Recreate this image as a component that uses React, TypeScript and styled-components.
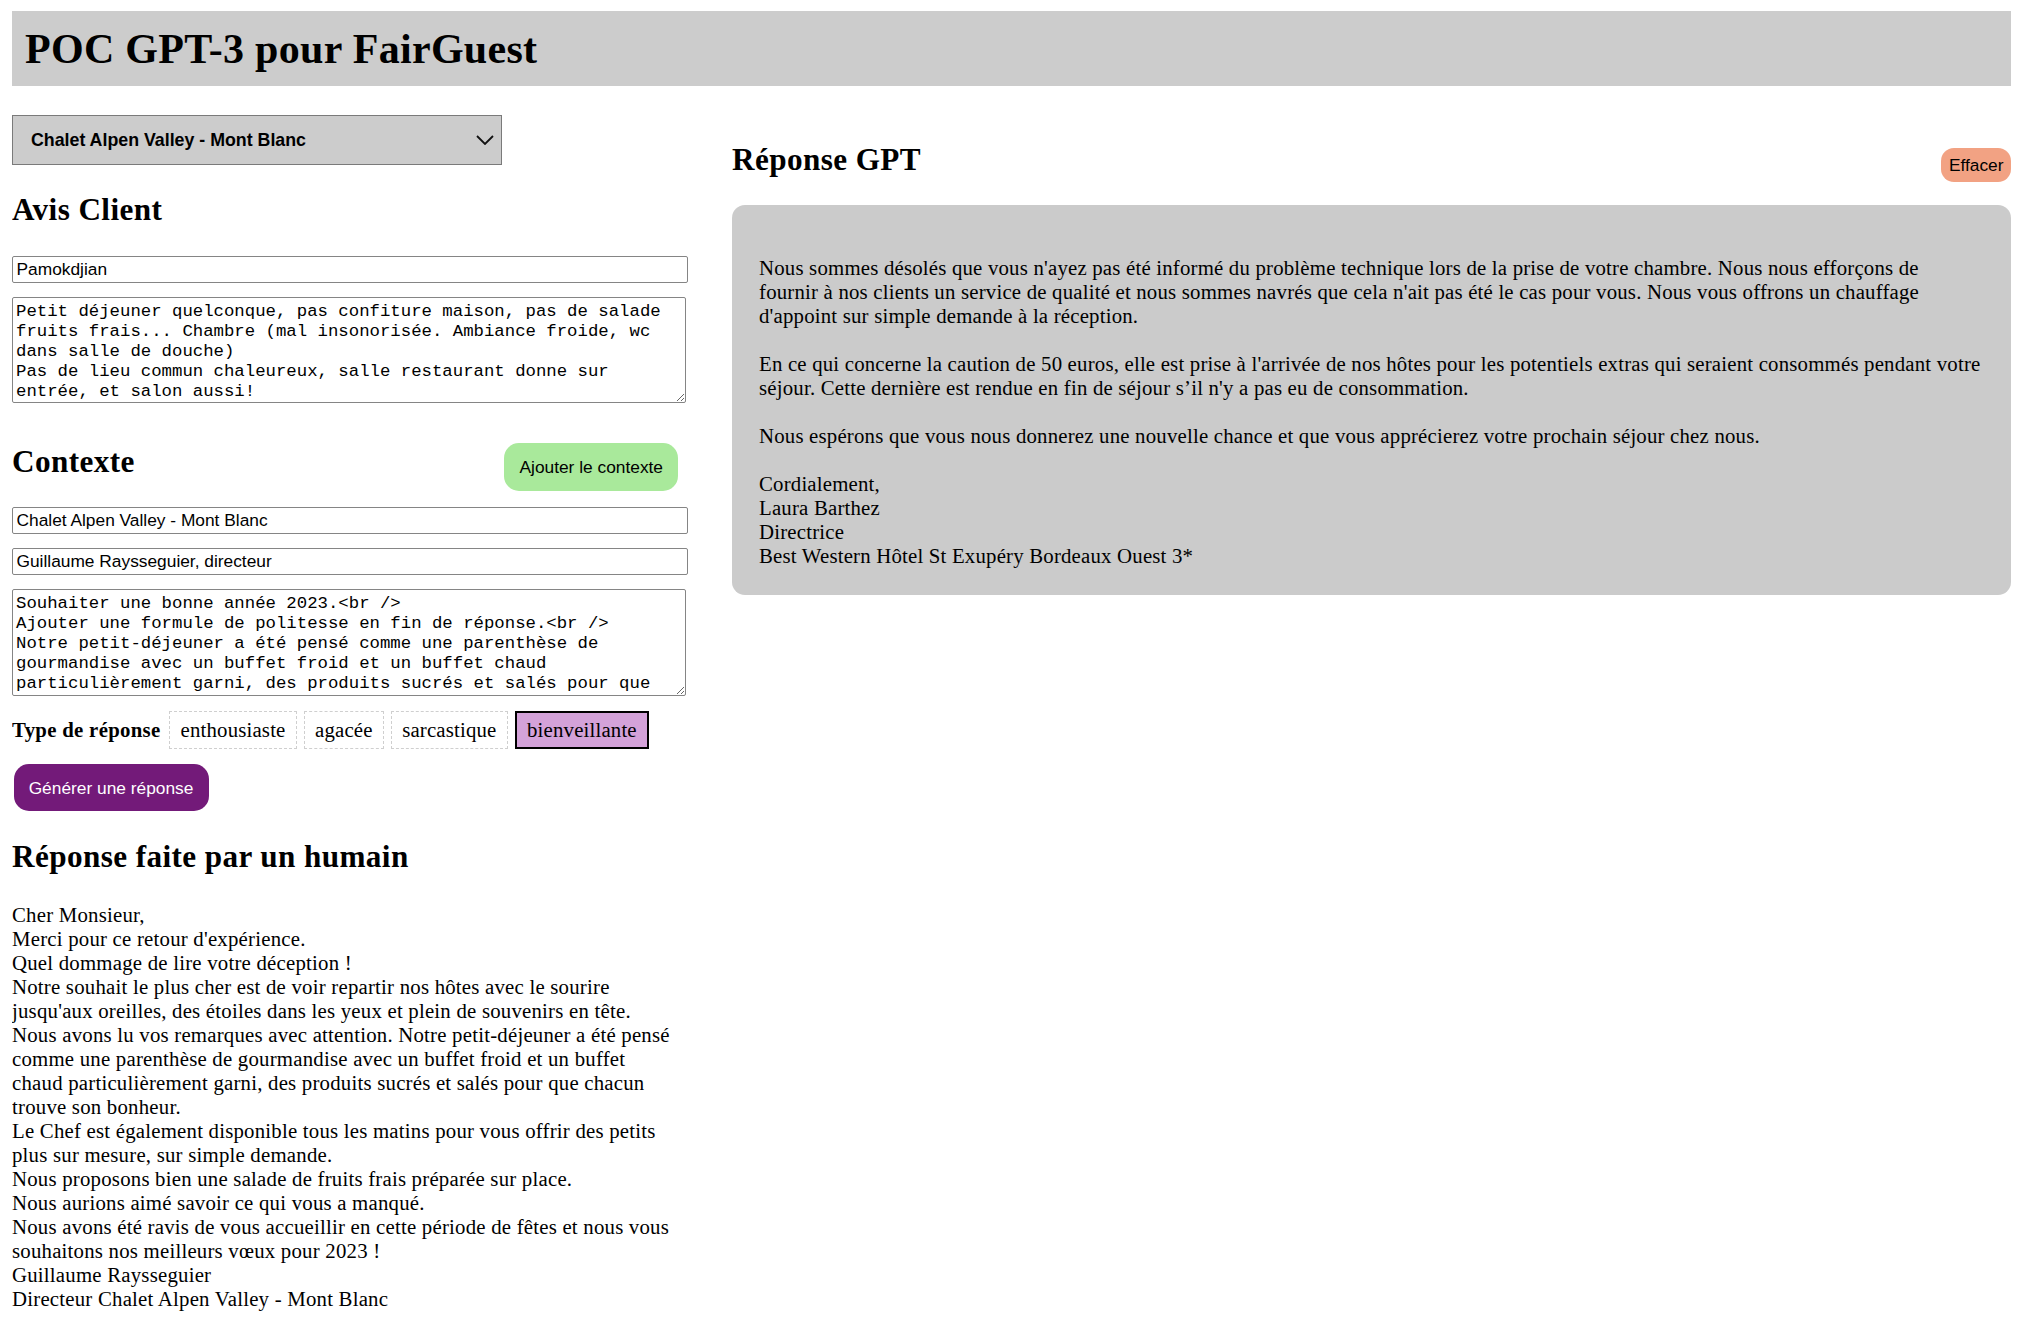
import React, { useState } from 'react'
import styled, { createGlobalStyle } from 'styled-components'

const GlobalStyle = createGlobalStyle`
  html, body {
    background: #ffffff;
  }
  body {
    margin: 11px 23px 0 12px;
    font-family: 'Liberation Serif', 'Times New Roman', serif;
    font-size: 20.8px;
    line-height: 24px;
    letter-spacing: 0.22px;
    color: #000000;
  }
  * {
    box-sizing: border-box;
  }
`

const Header = styled.header`
  display: flex;
  align-items: center;
  height: 75px;
  padding: 0 13px;
  background-color: #cccccc;
  h1 {
    margin: 0;
    font-size: 42px;
    line-height: 48px;
    font-weight: 700;
    letter-spacing: 0.3px;
  }
`

const Layout = styled.main`
  display: grid;
  grid-template-columns: 676px minmax(0, 1fr);
  column-gap: 44px;
  align-items: start;
`

const Column = styled.section`
  display: flex;
  flex-direction: column;
  align-items: flex-start;
`

const Title = styled.h2<{ $top?: number; $bottom?: number }>`
  margin: ${p => p.$top ?? 0}px 0 ${p => p.$bottom ?? 0}px;
  font-size: 31.2px;
  line-height: 36px;
  font-weight: 700;
  letter-spacing: 0.4px;
`

const SelectWrap = styled.div`
  position: relative;
  width: 490px;
  height: 50px;
  margin-top: 29px;
  svg {
    position: absolute;
    right: 8px;
    top: 20px;
    pointer-events: none;
  }
`

const HotelSelect = styled.select`
  appearance: none;
  width: 100%;
  height: 100%;
  padding: 0 40px 0 18px;
  border: 1.5px solid #7a7a7a;
  border-radius: 0;
  background-color: #cccccc;
  font-family: 'Liberation Sans', Arial, sans-serif;
  font-size: 17.8px;
  font-weight: 700;
  color: #000000;
`

const TextInput = styled.input<{ $top?: number }>`
  width: 100%;
  height: 27px;
  margin-top: ${p => p.$top ?? 0}px;
  padding: 0 3.5px;
  border: 1.5px solid #858585;
  border-radius: 2px;
  font-family: 'Liberation Sans', Arial, sans-serif;
  font-size: 17.33px;
  letter-spacing: 0;
  color: #000000;
`

const TextArea = styled.textarea<{ $height: number }>`
  width: 674px;
  height: ${p => p.$height}px;
  margin-top: 14px;
  padding: 3.5px 3px 2px;
  border: 1.5px solid #858585;
  border-radius: 2px;
  font-family: 'Liberation Mono', 'Courier New', monospace;
  font-size: 17.33px;
  line-height: 20px;
  letter-spacing: 0;
  color: #000000;
  overflow: hidden;
`

const ContextRow = styled.div`
  display: flex;
  justify-content: space-between;
  align-items: flex-start;
  width: 100%;
  margin-top: 40px;
  margin-bottom: 16px;
  h2 {
    margin-top: 1px;
  }
`

const PillButton = styled.button<{ $bg: string; $color?: string }>`
  border: none;
  background-color: ${p => p.$bg};
  color: ${p => p.$color ?? '#000000'};
  font-family: 'Liberation Sans', Arial, sans-serif;
  font-size: 17.33px;
  line-height: 20px;
  letter-spacing: 0;
  white-space: nowrap;
  cursor: pointer;
`

const AddButton = styled(PillButton)`
  height: 48px;
  margin-right: 10px;
  padding: 0 15px;
  border-radius: 15px;
`

const GenerateButton = styled(PillButton)`
  width: 195px;
  height: 47px;
  margin: 15px 0 0 1.5px;
  padding: 0;
  border-radius: 15px;
`

const ClearButton = styled(PillButton)`
  height: 34px;
  margin-top: 6px;
  padding: 0 7.5px;
  border-radius: 13px;
`

const ToneRow = styled.div`
  display: flex;
  align-items: center;
  gap: 6.5px;
  margin-top: 15px;
  strong {
    margin-right: 2px;
    letter-spacing: 0.3px;
  }
`

const ToneChip = styled.button<{ $active?: boolean }>`
  height: 38px;
  padding: 0 10.5px;
  border: ${p => (p.$active ? '2px solid #000000' : '1.5px dashed #cfcfcf')};
  background-color: ${p => (p.$active ? '#d4a2d9' : '#ffffff')};
  font-family: 'Liberation Serif', 'Times New Roman', serif;
  font-size: 20.8px;
  line-height: 24px;
  letter-spacing: 0.18px;
  color: #000000;
  cursor: pointer;
`

const HumanReply = styled.p`
  margin: 28px 0 0;
  white-space: nowrap;
`

const ReplyHeader = styled.div`
  display: flex;
  justify-content: space-between;
  align-items: flex-start;
  margin-top: 56px;
  margin-bottom: 23px;
`

const ReplyCard = styled.div`
  padding: 27px;
  border-radius: 13px;
  background-color: #cbcbcb;
  letter-spacing: 0.2px;
  white-space: pre;
  overflow: hidden;
`

const Chevron = () => (
  <svg width="18" height="10" viewBox="0 0 18 10">
    <path d="M1 1 L9 9 L17 1" fill="none" stroke="#111" strokeWidth="1.8" />
  </svg>
)

const reviewText = `Petit déjeuner quelconque, pas confiture maison, pas de salade fruits frais... Chambre (mal insonorisée. Ambiance froide, wc dans salle de douche)
Pas de lieu commun chaleureux, salle restaurant donne sur entrée, et salon aussi!`

const contextText = `Souhaiter une bonne année 2023.<br />
Ajouter une formule de politesse en fin de réponse.<br />
Notre petit-déjeuner a été pensé comme une parenthèse de gourmandise avec un buffet froid et un buffet chaud particulièrement garni, des produits sucrés et salés pour que chacun trouve son bonheur.<br />
Le Chef est également disponible tous les matins pour vous offrir des petits plus sur mesure, sur simple demande.`

// GPT output keeps its own line breaks, as shown in the card
const gptText = `
Nous sommes désolés que vous n'ayez pas été informé du problème technique lors de la prise de votre chambre. Nous nous efforçons de
fournir à nos clients un service de qualité et nous sommes navrés que cela n'ait pas été le cas pour vous. Nous vous offrons un chauffage
d'appoint sur simple demande à la réception.

En ce qui concerne la caution de 50 euros, elle est prise à l'arrivée de nos hôtes pour les potentiels extras qui seraient consommés pendant votre
séjour. Cette dernière est rendue en fin de séjour s’il n'y a pas eu de consommation.

Nous espérons que vous nous donnerez une nouvelle chance et que vous apprécierez votre prochain séjour chez nous.

Cordialement,
Laura Barthez
Directrice
Best Western Hôtel St Exupéry Bordeaux Ouest 3*`

const humanLines = [
  'Cher Monsieur,',
  "Merci pour ce retour d'expérience.",
  'Quel dommage de lire votre déception !',
  'Notre souhait le plus cher est de voir repartir nos hôtes avec le sourire',
  "jusqu'aux oreilles, des étoiles dans les yeux et plein de souvenirs en tête.",
  'Nous avons lu vos remarques avec attention. Notre petit-déjeuner a été pensé',
  'comme une parenthèse de gourmandise avec un buffet froid et un buffet',
  'chaud particulièrement garni, des produits sucrés et salés pour que chacun',
  'trouve son bonheur.',
  'Le Chef est également disponible tous les matins pour vous offrir des petits',
  'plus sur mesure, sur simple demande.',
  'Nous proposons bien une salade de fruits frais préparée sur place.',
  'Nous aurions aimé savoir ce qui vous a manqué.',
  'Nous avons été ravis de vous accueillir en cette période de fêtes et nous vous',
  'souhaitons nos meilleurs vœux pour 2023 !',
  'Guillaume Raysseguier',
  'Directeur Chalet Alpen Valley - Mont Blanc',
]

const tones = ['enthousiaste', 'agacée', 'sarcastique', 'bienveillante']

const App = () => {
  const [tone, setTone] = useState('bienveillante')

  return (
    <>
      <GlobalStyle />
      <Header>
        <h1>POC GPT-3 pour FairGuest</h1>
      </Header>
      <Layout>
        <Column>
          <SelectWrap>
            <HotelSelect defaultValue="chalet">
              <option value="chalet">Chalet Alpen Valley - Mont Blanc</option>
              <option value="bw">Best Western Hôtel St Exupéry Bordeaux Ouest</option>
            </HotelSelect>
            <Chevron />
          </SelectWrap>

          <Title $top={27} $bottom={28}>Avis Client</Title>
          <TextInput defaultValue="Pamokdjian" />
          <TextArea $height={106} defaultValue={reviewText} />

          <ContextRow>
            <Title>Contexte</Title>
            <AddButton $bg="#a9e99b">Ajouter le contexte</AddButton>
          </ContextRow>
          <TextInput defaultValue="Chalet Alpen Valley - Mont Blanc" />
          <TextInput $top={14} defaultValue="Guillaume Raysseguier, directeur" />
          <TextArea $height={107} defaultValue={contextText} />

          <ToneRow>
            <strong>Type de réponse</strong>
            {tones.map(t => (
              <ToneChip key={t} $active={t === tone} onClick={() => setTone(t)}>
                {t}
              </ToneChip>
            ))}
          </ToneRow>

          <GenerateButton $bg="#731a79" $color="#ffffff">Générer une réponse</GenerateButton>

          <Title $top={28}>Réponse faite par un humain</Title>
          <HumanReply>
            {humanLines.map((line, i) => (
              <React.Fragment key={i}>
                {line}
                {i < humanLines.length - 1 && <br />}
              </React.Fragment>
            ))}
          </HumanReply>
        </Column>

        <section>
          <ReplyHeader>
            <Title>Réponse GPT</Title>
            <ClearButton $bg="#f2a283">Effacer</ClearButton>
          </ReplyHeader>
          <ReplyCard>{gptText}</ReplyCard>
        </section>
      </Layout>
    </>
  )
}

export default App
